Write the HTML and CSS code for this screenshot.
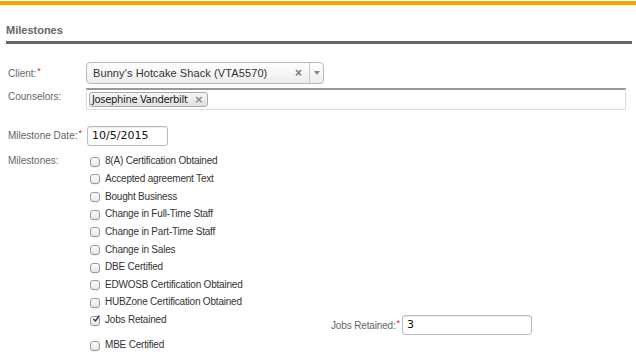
FILE: index.html
```html
<!DOCTYPE html>
<html lang="en">
<head>
    <meta charset="UTF-8">
    <title>Milestones</title>
    <link rel="stylesheet" href="styles.css">
</head>
<body>
    <div class="top-bar"></div>

    <div class="section">
        <h2 class="section-title">Milestones</h2>

        <div class="field-row row-client">
            <label class="field-label">Client:<span class="req">*</span></label>
            <div class="select-box">
                <span class="select-text">Bunny's Hotcake Shack (VTA5570)</span>
                <span class="select-clear">&times;</span>
                <span class="select-arrow"><span class="tri"></span></span>
            </div>
        </div>

        <div class="field-row row-counselors">
            <label class="field-label">Counselors:</label>
            <div class="multi-box">
                <span class="tag">Josephine Vanderbilt <span class="tag-x">&times;</span></span>
            </div>
        </div>

        <div class="field-row row-date">
            <label class="field-label">Milestone Date:<span class="req">*</span></label>
            <div class="text-input date-input">10/5/2015</div>
        </div>

        <div class="field-row row-milestones">
            <label class="field-label">Milestones:</label>
            <div class="check-list">
                <div class="check-row"><span class="box"></span>8(A) Certification Obtained</div>
                <div class="check-row"><span class="box"></span>Accepted agreement Text</div>
                <div class="check-row"><span class="box"></span>Bought Business</div>
                <div class="check-row"><span class="box"></span>Change in Full-Time Staff</div>
                <div class="check-row"><span class="box"></span>Change in Part-Time Staff</div>
                <div class="check-row"><span class="box"></span>Change in Sales</div>
                <div class="check-row"><span class="box"></span>DBE Certified</div>
                <div class="check-row"><span class="box"></span>EDWOSB Certification Obtained</div>
                <div class="check-row"><span class="box"></span>HUBZone Certification Obtained</div>
                <div class="check-row with-sub">
                    <div class="check-main">
                        <span class="box checked">
                            <svg width="12" height="12" viewBox="0 0 12 12"><path d="M2.5 6.2 L5 9 L10.5 1.5" fill="none" stroke="#1d3f78" stroke-width="2" stroke-linecap="round" stroke-linejoin="round"/></svg>
                        </span>Jobs Retained
                    </div>
                    <div class="sub-field">
                        <label class="sub-label">Jobs Retained:<span class="req">*</span></label>
                        <div class="text-input jobs-input">3</div>
                    </div>
                </div>
                <div class="check-row"><span class="box"></span>MBE Certified</div>
            </div>
        </div>
    </div>
</body>
</html>
```

FILE: styles.css
```css
body {
    margin: 0;
    font-family: "Liberation Sans", Arial, sans-serif;
    font-size: 10px;
    color: #333;
    background: #fff;
}

.top-bar {
    margin-top: 1px;
    height: 4px;
    background-color: #f7a400;
}

.section {
    padding: 0 4px 0 6px;
}

.section-title {
    margin: 0;
    padding: 19px 0 5px 0;
    font-size: 11px;
    font-weight: bold;
    color: #666;
    border-bottom: 3px solid #666;
    line-height: 12px;
}

.field-row {
    display: flex;
    align-items: flex-start;
    padding-left: 2px;
}

.field-label {
    width: 78px;
    color: #666;
    font-size: 10px;
}

.req {
    color: #d21;
    font-size: 9px;
    vertical-align: 3px;
    margin-left: 1px;
}

/* client select */
.row-client {
    margin-top: 18px;
}

.row-client .field-label {
    padding-top: 4px;
}

.select-box {
    display: flex;
    align-items: center;
    width: 236px;
    height: 20px;
    border: 1px solid #b8b8b8;
    border-radius: 4px;
    background: linear-gradient(#fff, #ececec);
    font-size: 11px;
    color: #333;
}

.select-text {
    flex-grow: 1;
    padding-left: 6px;
    letter-spacing: 0.1px;
}

.select-clear {
    color: #777;
    font-size: 12px;
    font-weight: bold;
    margin-right: 7px;
}

.select-arrow {
    display: flex;
    align-items: center;
    justify-content: center;
    width: 13px;
    height: 20px;
    border-left: 1px solid #c8c8c8;
}

.tri {
    width: 0;
    height: 0;
    border-left: 3px solid transparent;
    border-right: 3px solid transparent;
    border-top: 4px solid #888;
}

/* counselors */
.row-counselors {
    margin-top: 4px;
}

.row-counselors .field-label {
    padding-top: 3px;
}

.multi-box {
    width: 536px;
    height: 17px;
    border: 1px solid #ddd;
    border-top: 2px solid #999;
    padding: 2px 0 0 2px;
}

.tag {
    display: inline-block;
    height: 13px;
    line-height: 13px;
    padding: 0 4px 0 2px;
    border: 1px solid #aaa;
    border-radius: 3px;
    background: linear-gradient(#f6f6f6, #e2e2e2);
    font-family: "DejaVu Sans", sans-serif;
    font-size: 10px;
    letter-spacing: -0.35px;
    color: #222;
}

.tag-x {
    color: #888;
    font-size: 11px;
    font-weight: bold;
    margin-left: 4px;
}

/* date */
.row-date {
    margin-top: 16px;
}

.row-date .field-label {
    padding-top: 2px;
}

.text-input {
    height: 18px;
    line-height: 18px;
    border: 1px solid #bbb;
    border-radius: 3px;
    box-shadow: inset 0 1px 1px rgba(0, 0, 0, 0.08);
    padding-left: 4px;
    font-family: "DejaVu Sans", sans-serif;
    font-size: 11px;
    color: #111;
}

.date-input {
    width: 75px;
    margin-left: 1px;
}

/* milestones checkboxes */
.row-milestones {
    margin-top: 6px;
}

.row-milestones .field-label {
    padding-top: 3px;
}

.check-list {
    display: flex;
    flex-direction: column;
    padding-left: 4px;
}

.check-row {
    display: flex;
    align-items: center;
    height: 17.65px;
    color: #333;
    letter-spacing: -0.2px;
}

.box {
    display: inline-flex;
    align-items: center;
    justify-content: center;
    width: 8px;
    height: 8px;
    margin: 2px 5px 0 0;
    border: 1px solid #9a9a9a;
    border-radius: 3px;
    background: linear-gradient(#fdfdfd, #e6e6e6);
    box-shadow: 0 1px 0 rgba(0, 0, 0, 0.05);
}

.box.checked svg {
    margin: -4px -1px 0 1px;
}

.with-sub {
    height: 25px;
    align-items: flex-start;
}

.check-main {
    display: flex;
    align-items: center;
    width: 241px;
    height: 17.65px;
}

.sub-field {
    display: flex;
    align-items: center;
    margin-top: 4px;
}

.sub-label {
    color: #666;
    letter-spacing: -0.15px;
    margin-right: 2px;
}

.jobs-input {
    width: 124px;
}
```
